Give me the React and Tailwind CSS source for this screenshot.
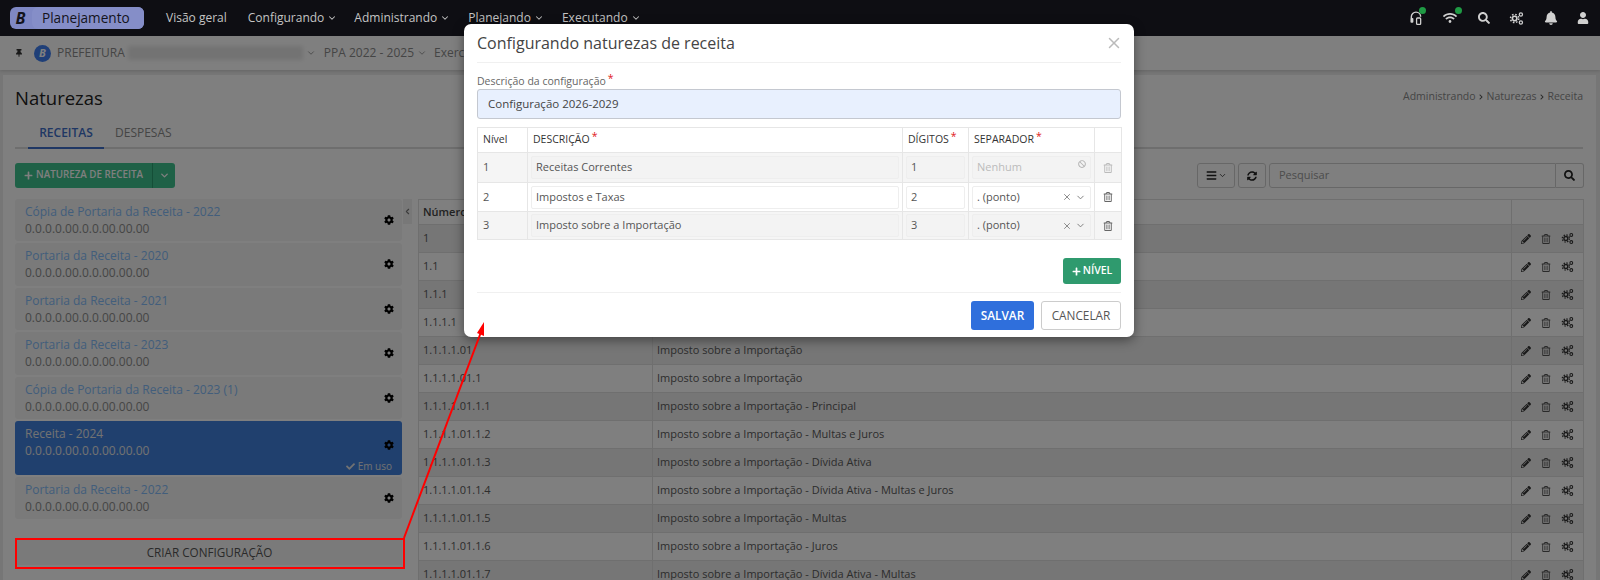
import { ChevronDown, ChevronLeft, X } from 'lucide-react';
import {
  FaBan, FaBars, FaBell, FaCheck, FaChevronRight, FaCog, FaPencilAlt, FaPlus, FaRegTrashAlt,
  FaSearch, FaSyncAlt, FaThumbtack, FaUser, FaWifi,
} from 'react-icons/fa';

const CogShare = ({ className }) => (
  <svg viewBox="0 0 24 24" className={className} fill="none" stroke="currentColor">
    <circle cx="9" cy="12" r="3.6" strokeWidth="2.6" />
    <circle cx="9" cy="12" r="6.6" strokeWidth="2.4" strokeDasharray="2.6 2.6" />
    <circle cx="19" cy="5.5" r="2.6" strokeWidth="2" />
    <circle cx="19" cy="18.5" r="2.6" strokeWidth="2" />
  </svg>
);

const HeadsetIcon = ({ className }) => (
  <svg viewBox="0 0 24 24" className={className} fill="none" stroke="currentColor">
    <path d="M4 13V10a8 8 0 0 1 16 0" strokeWidth="2.4" />
    <rect x="2.5" y="12" width="5" height="8" rx="1.5" fill="currentColor" stroke="none" />
    <rect x="13" y="12" width="7" height="11" rx="1.5" strokeWidth="2.2" />
  </svg>
);

const Req = () => <span className="relative -top-[3px] ml-[2px] text-[#e02020]">*</span>;

const NavItem = ({ label, className }) => (
  <div className={`flex items-center gap-[3px] ${className}`}>
    {label}
    <ChevronDown size={10} strokeWidth={2.5} />
  </div>
);

const configs = [
  { title: 'Cópia de Portaria da Receita - 2022' },
  { title: 'Portaria da Receita - 2020' },
  { title: 'Portaria da Receita - 2021' },
  { title: 'Portaria da Receita - 2023' },
  { title: 'Cópia de Portaria da Receita - 2023 (1)' },
  { title: 'Receita - 2024', active: true },
  { title: 'Portaria da Receita - 2022' },
];

const rows = [
  ['1', ''],
  ['1.1', ''],
  ['1.1.1', ''],
  ['1.1.1.1', ''],
  ['1.1.1.1.01', 'Imposto sobre a Importação'],
  ['1.1.1.1.01.1', 'Imposto sobre a Importação'],
  ['1.1.1.1.01.1.1', 'Imposto sobre a Importação - Principal'],
  ['1.1.1.1.01.1.2', 'Imposto sobre a Importação - Multas e Juros'],
  ['1.1.1.1.01.1.3', 'Imposto sobre a Importação - Dívida Ativa'],
  ['1.1.1.1.01.1.4', 'Imposto sobre a Importação - Dívida Ativa - Multas e Juros'],
  ['1.1.1.1.01.1.5', 'Imposto sobre a Importação - Multas'],
  ['1.1.1.1.01.1.6', 'Imposto sobre a Importação - Juros'],
  ['1.1.1.1.01.1.7', 'Imposto sobre a Importação - Dívida Ativa - Multas'],
];

const levels = [
  { n: '1', desc: 'Receitas Correntes', dig: '1', sep: 'Nenhum', locked: true, grey: true, h: 'h-[30px]' },
  { n: '2', desc: 'Impostos e Taxas', dig: '2', sep: '. (ponto)', h: 'h-[29px]' },
  { n: '3', desc: 'Imposto sobre a Importação', dig: '3', sep: '. (ponto)', grey: true, h: 'h-[28px]' },
];

function ConfigItem({ title, active }) {
  return (
    <div className={`relative rounded-[3px] px-[10px] pt-[4px] ${active ? 'h-[54px] bg-[#4080dc] text-[#e4e4e4]' : 'h-[42.4px] bg-[#f4f4f4] text-[#8c8c8c]'}`}>
      <div className={`h-[17px] text-[12px] leading-[17px] ${active ? '' : 'text-[#84bcf8]'}`}>{title}</div>
      <div className="h-[17px] text-[12px] leading-[17px]">0.0.0.0.00.0.0.00.00.00</div>
      <FaCog className={`absolute right-[8px] ${active ? 'top-[19px]' : 'top-[16px]'} text-[10px] text-black`} />
      {active && (
        <div className="absolute bottom-[1px] right-[10px] flex items-center gap-[3px] text-[10px] leading-[15px]">
          <FaCheck className="text-[9px]" /> Em uso
        </div>
      )}
    </div>
  );
}

function DataTable() {
  return (
    <table className="w-[1165px] table-fixed border-collapse text-[11px] text-[#5a5a5a]">
      <colgroup>
        <col className="w-[234px]" />
        <col className="w-[859px]" />
        <col className="w-[72px]" />
      </colgroup>
      <thead>
        <tr className="h-[25px]">
          <th className="border border-[#dedede] px-[4px] text-left font-semibold text-[#444]">Número</th>
          <th className="border border-[#dedede] px-[4px] text-left font-semibold text-[#444]">Descrição</th>
          <th className="border border-[#dedede]" />
        </tr>
      </thead>
      <tbody>
        {rows.map((r, i) => (
          <tr key={r[0]} className={`h-[28px] ${i % 2 === 0 ? 'bg-[#ececec]' : 'bg-white'}`}>
            <td className="border border-[#dedede] px-[4px]">{r[0]}</td>
            <td className="border border-[#dedede] px-[4px]">{r[1]}</td>
            <td className="border border-[#dedede]">
              <div className="flex items-center justify-center gap-[10px] text-[#333]">
                <FaPencilAlt className="text-[10px]" />
                <FaRegTrashAlt className="text-[10px] text-[#555]" />
                <CogShare className="h-[13px] w-[13px]" />
              </div>
            </td>
          </tr>
        ))}
      </tbody>
    </table>
  );
}

function Modal() {
  const field = 'flex h-[23px] items-center rounded-[2px] border px-[4px] text-[11px]';
  return (
    <div className="absolute left-[464px] top-[24px] z-30 h-[313px] w-[670px] rounded-[7px] bg-white px-[13px] text-[#555] shadow-[0_3px_12px_rgba(0,0,0,0.45)]">
      <div className="flex h-[39px] items-center justify-between border-b border-[#f0f0f0]">
        <h2 className="text-[16px] font-normal text-[#444]">Configurando naturezas de receita</h2>
        <X size={18} strokeWidth={2} className="mr-[-2px] text-[#bbbbbb]" />
      </div>
      <label className="mt-[10px] block h-[16px] text-[10.5px] leading-[16px] font-medium text-[#666]">
        Descrição da configuração<Req />
      </label>
      <div className="flex h-[30px] items-center rounded-[3px] border border-[#c4c8d0] bg-[#e8f0fe] pl-[10px] text-[11.5px] text-[#444]">
        Configuração 2026-2029
      </div>
      <table className="mt-[8px] w-[644px] table-fixed border-collapse text-[11px]">
        <colgroup>
          <col className="w-[50px]" />
          <col className="w-[375px]" />
          <col className="w-[66px]" />
          <col className="w-[126px]" />
          <col className="w-[27px]" />
        </colgroup>
        <thead>
          <tr className="h-[25px] text-[10.5px] text-[#333]">
            <th className="border border-[#e6e6e6] px-[5px] text-left font-normal">Nível</th>
            <th className="border border-[#e6e6e6] px-[5px] text-left font-normal">DESCRIÇÃO<Req /></th>
            <th className="border border-[#e6e6e6] px-[5px] text-left font-normal">DÍGITOS<Req /></th>
            <th className="border border-[#e6e6e6] px-[5px] text-left font-normal">SEPARADOR<Req /></th>
            <th className="border border-[#e6e6e6]" />
          </tr>
        </thead>
        <tbody>
          {levels.map((l) => {
            const input = `${field} ${l.grey ? 'border-[#eeeeee] bg-[#f3f3f3]' : 'border-[#eeeeee] bg-white'}`;
            return (
              <tr key={l.n} className={`${l.h} ${l.grey ? 'bg-[#f5f5f5]' : 'bg-white'}`}>
                <td className="border border-[#e6e6e6] px-[5px]">{l.n}</td>
                <td className="border border-[#e6e6e6] px-[3px]">
                  <div className={input}>{l.desc}</div>
                </td>
                <td className="border border-[#e6e6e6] px-[3px]">
                  <div className={input}>{l.dig}</div>
                </td>
                <td className="border border-[#e6e6e6] px-[3px]">
                  <div className={`${input} justify-between`}>
                    <span className={l.locked ? 'text-[#bbb]' : ''}>{l.sep}</span>
                    {l.locked ? (
                      <FaBan className="-mt-[7px] text-[8px] text-[#b4b4b4]" />
                    ) : (
                      <span className="flex items-center gap-[3px] text-[#777]">
                        <X size={10} />
                        <ChevronDown size={11} />
                      </span>
                    )}
                  </div>
                </td>
                <td className="border border-[#e6e6e6] text-center">
                  <FaRegTrashAlt className={`mx-auto text-[10px] ${l.locked ? 'text-[#bbb]' : 'text-[#666]'}`} />
                </td>
              </tr>
            );
          })}
        </tbody>
      </table>
      <div className="mt-[18px] flex justify-end">
        <button className="flex h-[26px] w-[58px] items-center justify-center gap-[2px] rounded-[3px] bg-[#2f9a6e] text-[10.5px] font-semibold text-white">
          <FaPlus className="text-[9px]" /> NÍVEL
        </button>
      </div>
      <div className="mt-[8px] flex justify-end gap-[7px] border-t border-[#f0f0f0] pt-[8px]">
        <button className="h-[29px] w-[63px] rounded-[3px] bg-[#2f6fdc] text-[11.8px] font-semibold text-white">SALVAR</button>
        <button className="h-[29px] w-[80px] rounded-[3px] border border-[#ccc] bg-white text-[11.8px] text-[#555]">CANCELAR</button>
      </div>
    </div>
  );
}

export default function App() {
  return (
    <div className="relative flex h-[580px] w-[1600px] flex-col overflow-hidden bg-[#ececec] font-['Open_Sans',sans-serif]">
      {/* top bar stays bright over the backdrop */}
      <header className="relative z-20 flex h-[36px] shrink-0 items-center bg-[#0e0e13] text-[12px] text-[#c4c4c4]">
        <div className="ml-[10px] flex h-[22px] w-[134px] items-center rounded-[6px] bg-[#7f88c4]">
          <span className="w-[21px] text-center text-[16px] font-bold italic text-[#14141c]">B</span>
          <span className="ml-[1px] flex h-[22px] flex-1 items-center rounded-[6px] bg-[#858ec8] pl-[10px] text-[13.6px] text-[#14141c]">Planejamento</span>
        </div>
        <div className="ml-[22px]">Visão geral</div>
        <NavItem label="Configurando" className="ml-[21px]" />
        <NavItem label="Administrando" className="ml-[17px]" />
        <NavItem label="Planejando" className="ml-[18px]" />
        <NavItem label="Executando" className="ml-[18px]" />
        <div className="ml-auto flex items-center gap-[19px] pr-[11px] text-[14px] text-[#d0d0d0]">
          <span className="relative">
            <HeadsetIcon className="h-[14px] w-[14px]" />
            <span className="absolute -right-[3px] -top-[4px] h-[7px] w-[7px] rounded-full bg-[#1f9a44]" />
          </span>
          <span className="relative ml-[1px]">
            <FaWifi />
            <span className="absolute -right-[5px] -top-[4px] h-[7px] w-[7px] rounded-full bg-[#1f9a44]" />
          </span>
          <FaSearch className="ml-[2px] text-[12px]" />
          <CogShare className="h-[15px] w-[15px]" />
          <FaBell className="ml-[1px]" />
          <FaUser className="text-[12px]" />
        </div>
      </header>

      <div className="flex h-[34px] shrink-0 items-center bg-white pl-[15px] text-[12px] text-[#8a8a8a] shadow-[0_1px_3px_rgba(0,0,0,0.15)]">
        <FaThumbtack className="text-[8px] text-[#333]" />
        <span className="ml-[11px] flex h-[17px] w-[17px] items-center justify-center rounded-full bg-[#3f7ff0] text-[11px] font-bold italic text-white">B</span>
        <span className="ml-[6px]">PREFEITURA</span>
        <span className="ml-[3px] h-[14px] w-[175px] bg-[#e6e6e6] blur-[2px]" />
        <ChevronDown size={10} className="ml-[3px]" />
        <span className="ml-[8px]">PPA 2022 - 2025</span>
        <ChevronDown size={10} className="ml-[3px]" />
        <span className="ml-[7px]">Exercício</span>
      </div>

      <main className="ml-[3px] mr-[4px] mt-[5px] flex-1 bg-white px-[12px] pr-[13px]">
        <div className="flex h-[44px] items-center justify-between">
          <h1 className="pt-[2px] text-[18.5px] font-normal text-[#222]">Naturezas</h1>
          <div className="flex items-center gap-[1.5px] text-[10.5px] text-[#8a8a8a]">
            Administrando <FaChevronRight className="mx-[1px] text-[6px] text-[#555]" /> Naturezas <FaChevronRight className="mx-[1px] text-[6px] text-[#555]" /> Receita
          </div>
        </div>
        <div className="flex h-[30px] border-b-2 border-[#dcdcdc] text-[12px] font-semibold">
          <div className="-mb-[2px] ml-[13px] flex w-[76px] items-center justify-center border-b-2 border-[#3f6fc8] pb-[1px] text-[#3f6fc8]">RECEITAS</div>
          <div className="ml-[11px] flex items-center pb-[1px] font-normal text-[#8a8a8a]">DESPESAS</div>
        </div>

        <div className="mt-[14px] flex h-[25px] items-center">
          <div className="flex h-[25px] w-[160px] rounded-[3px] bg-[#3fc28e] text-[9.8px] font-semibold text-white">
            <div className="flex w-[138px] items-center justify-center gap-[3px] border-r border-[#2a9e70]">
              <FaPlus className="text-[9px]" /> NATUREZA DE RECEITA
            </div>
            <div className="flex flex-1 items-center justify-center">
              <ChevronDown size={11} strokeWidth={3} />
            </div>
          </div>
          <div className="-mr-[1px] ml-auto flex h-[25px] items-stretch text-[#222]">
            <button className="flex w-[38px] items-center justify-center gap-[1px] rounded-[3px] border border-[#cfcfcf]">
              <FaBars className="text-[11px]" /><ChevronDown size={9} />
            </button>
            <button className="ml-[3px] flex w-[28px] items-center justify-center rounded-[3px] border border-[#cfcfcf]">
              <FaSyncAlt className="text-[10px]" />
            </button>
            <div className="ml-[3px] flex w-[287px] items-center rounded-l-[3px] border border-[#cfcfcf] pl-[9px] text-[11px] text-[#999]">Pesquisar</div>
            <button className="flex w-[28px] items-center justify-center rounded-r-[3px] border border-l-0 border-[#cfcfcf]">
              <FaSearch className="text-[11px]" />
            </button>
          </div>
        </div>

        <div className="mt-[11px] flex">
          <div className="w-[387px] shrink-0">
            <div className="flex flex-col gap-[2px]">
              {configs.map((c) => (
                <ConfigItem key={c.title} {...c} />
              ))}
            </div>
            <button className="mx-[2px] mt-[20px] h-[26px] w-[385px] bg-[#f4f4f4] text-[11.7px] text-[#555]">CRIAR CONFIGURAÇÃO</button>
          </div>
          <div className="ml-[1px] flex h-[25px] w-[9px] items-center justify-center bg-[#f0f0f0] text-[#777]">
            <ChevronLeft size={9} strokeWidth={3} />
          </div>
          <div className="ml-[6px]">
            <DataTable />
          </div>
        </div>
      </main>

      <div className="absolute inset-0 z-10 bg-black/50" />
      <Modal />

      {/* red annotation */}
      <div className="absolute left-[15px] top-[538px] z-40 h-[31px] w-[390px] border-2 border-[#ff0000]" />
      <svg className="pointer-events-none absolute left-0 top-0 z-40 h-[580px] w-[1600px]" viewBox="0 0 1600 580">
        <line x1="404" y1="538" x2="481" y2="332" stroke="#ff0000" strokeWidth="2" />
        <polygon points="484,322 477,333 484,336" fill="#ff0000" />
      </svg>
    </div>
  );
}
